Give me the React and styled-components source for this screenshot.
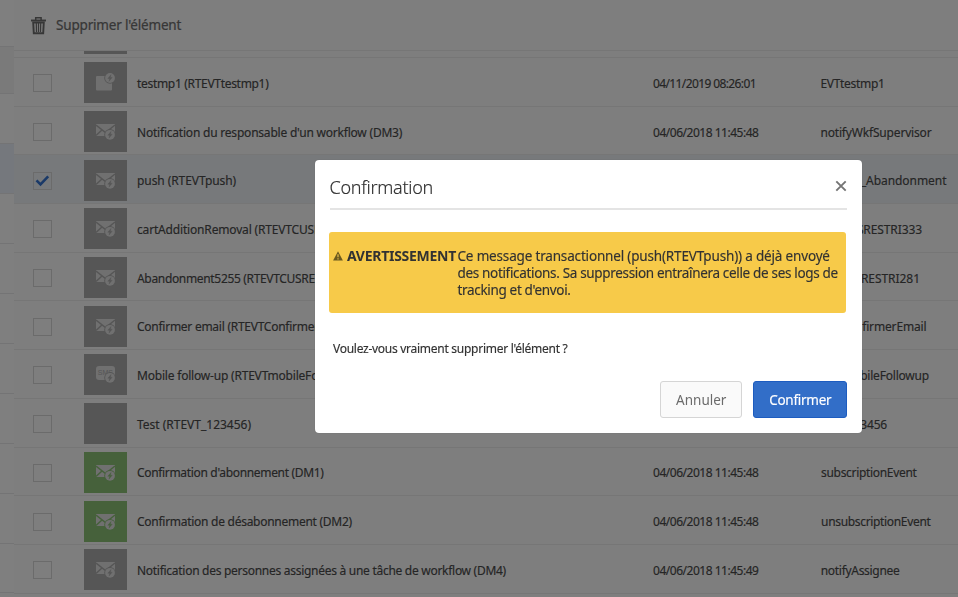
import React from "react";
import styled, { createGlobalStyle } from "styled-components";

const Global = createGlobalStyle`
  * { box-sizing: border-box; }
  body { margin: 0; overflow: hidden; font-family: "Noto Sans", sans-serif; color: #4a4a4a; }
`;

const Page = styled.div`
  display: flex;
  width: 958px;
  height: 597px;
  overflow: hidden;
  background: #fcfcfc;
`;

const Rail = styled.aside`
  flex: none;
  width: 14px;
`;

const RailItem = styled.div`
  height: ${(p) => p.$h}px;
  background: ${(p) => p.$bg || "#ffffff"};
  border-bottom: 1px solid #e8e8ea;
`;

const Main = styled.main`
  flex: 1;
  min-width: 0;
  display: flex;
  flex-direction: column;
`;

const Toolbar = styled.header`
  flex: none;
  display: flex;
  align-items: center;
  gap: 9px;
  height: 51px;
  padding-left: 16px;
  border-bottom: 1px solid #ececec;
  color: #6e6e6e;
  font-size: 13.5px;
  letter-spacing: -0.18px;
`;

const ToolbarLabel = styled.span`
  -webkit-text-stroke: 0.2px currentColor;
`;

const PartialRow = styled.div`
  flex: none;
  height: 7px;
  padding-left: 70px;
  border-bottom: 1px solid #ececec;
`;

const PartialTile = styled.div`
  width: 43px;
  height: 3px;
  background: #acacac;
`;

const Row = styled.div`
  flex: none;
  display: flex;
  align-items: center;
  height: 48.7px;
  padding-left: 19px;
  background: ${(p) => (p.$selected ? "#eff3f7" : "transparent")};
  border-bottom: 1px solid #ececec;
  font-size: 12px;
  white-space: nowrap;
`;

const Checkbox = styled.span`
  display: flex;
  align-items: center;
  justify-content: center;
  width: 19px;
  height: 18px;
  margin-top: 3px;
  border: 1px solid #d6d6d6;
`;

const Tile = styled.span`
  display: flex;
  align-items: center;
  justify-content: center;
  width: 43px;
  height: 41px;
  margin-left: 32px;
  margin-top: 2px;
  background: ${(p) => (p.$live ? "#8cc277" : "#acacac")};
`;

const Text = styled.span`
  letter-spacing: ${(p) => p.$track}px;
  -webkit-text-stroke: 0.15px currentColor;
`;

const NameCell = styled.div`
  width: 526px;
  padding: 3px 0 0 10px;
`;

const DateCell = styled.div`
  width: 167.5px;
  padding-top: 3px;
`;

const EventCell = styled.div`
  display: flex;
  justify-content: flex-end;
  width: ${(p) => p.$w}px;
  padding-top: 3px;
`;

const Overlay = styled.div`
  position: fixed;
  inset: 0;
  padding: 160px 0 0 314.5px;
  background: rgba(0, 0, 0, 0.5);
`;

const Dialog = styled.section`
  width: 547.5px;
  height: 272.5px;
  padding: 0 15px;
  border-radius: 4px;
  background: #ffffff;
  color: #323232;
  box-shadow: 0 0 1px rgba(0, 0, 0, 0.3);
`;

const DialogHeader = styled.div`
  display: flex;
  align-items: center;
  justify-content: space-between;
  height: 50px;
  padding-top: 4px;
  border-bottom: 2px solid #e4e4e4;
`;

const Title = styled.h1`
  margin: 2px 0 0;
  font-size: 18px;
  font-weight: 300;
  letter-spacing: -0.27px;
  color: #323232;
  -webkit-text-stroke: 0.15px currentColor;
`;

const Warning = styled.div`
  display: flex;
  align-items: flex-start;
  width: 517px;
  height: 81px;
  margin: 22px 0 0 -0.5px;
  padding: 15px 0 0 4px;
  border-radius: 3px;
  background: #f7ca49;
  font-size: 13.5px;
  line-height: 17px;
`;

const WarningLabel = styled.strong`
  display: flex;
  align-items: center;
  width: 124.5px;
  gap: 4px;
  font-size: 14px;
  letter-spacing: -0.27px;
`;

const WarningBody = styled.div`
  display: flex;
  flex-direction: column;
  padding-top: 1px;
  white-space: nowrap;
`;

const Question = styled.p`
  height: 18px;
  margin: 26.5px 0 0 3.5px;
  font-size: 12px;
  line-height: 18px;
`;

const Actions = styled.div`
  display: flex;
  justify-content: flex-end;
  gap: 11px;
  margin-top: 23px;
`;

const Button = styled.button`
  width: ${(p) => (p.$primary ? 94.5 : 81.5)}px;
  height: 37.5px;
  padding: 1px 0 0 1px;
  border: 1px solid ${(p) => (p.$primary ? "#1d5cc0" : "#d5d5d5")};
  border-radius: 3px;
  background: ${(p) => (p.$primary ? "#326ec8" : "#fafafa")};
  color: ${(p) => (p.$primary ? "#ffffff" : "#6b6b6b")};
  font-family: inherit;
  font-size: 13.5px;
`;

const TrashIcon = () => (
  <svg width="17" height="19" viewBox="0 0 17 19" fill="none" stroke="#6e6e6e">
    <path d="M1 4.5h15" strokeWidth="1.9" />
    <path d="M5.7 4V1.8h5.4V4" strokeWidth="1.5" />
    <path d="M3.2 6.5l.6 10.7h9.4l.6-10.7Z" strokeWidth="1.9" />
    <path d="M6.3 7l.2 9M8.5 7v9M10.7 7l-.2 9" strokeWidth="1.2" />
  </svg>
);

const Bolt = ({ y, fill }) => (
  <g transform={`translate(14 ${y})`}>
    <circle r="5.8" fill={fill} />
    <circle r="4.9" fill="#e0e0e0" />
    <path d="M1-3.3-2.2.5H-.3L-1 3.3 2.2-.6H.3Z" fill={fill} stroke={fill} strokeWidth="0.4" />
  </g>
);

const MessageIcon = ({ kind, fill }) => {
  if (kind === "none") return null;
  return (
    <svg width="20" height="19" viewBox="0 0 20 19">
      {kind === "mail" && (
        <>
          <path d="M0 2h19v12H0Z" fill="#e0e0e0" />
          <path d="M0 3l9.5 7.5L19 3M0 13.5l6.5-6M19 13.5l-6.5-6" stroke={fill} strokeWidth="1.5" fill="none" />
          <Bolt y={12.8} fill={fill} />
        </>
      )}
      {kind === "push" && (
        <>
          <rect x="0" y="3" width="16" height="14.5" rx="1" fill="#e0e0e0" />
          <Bolt y={5} fill={fill} />
        </>
      )}
      {kind === "sms" && (
        <>
          <rect x="0" y="1" width="19" height="14" rx="3" fill="#e0e0e0" />
          <text x="1.8" y="10.3" fontSize="7" fontFamily="Liberation Sans, sans-serif" fill={fill}>SMS</text>
          <Bolt y={12.8} fill={fill} />
        </>
      )}
    </svg>
  );
};

const CheckIcon = () => (
  <svg width="15" height="13" viewBox="0 0 15 13">
    <path d="M1.5 6.3l4 4 7.7-8" stroke="#3473d0" strokeWidth="2.6" fill="none" />
  </svg>
);

const AlertIcon = () => (
  <svg width="10" height="10" viewBox="0 0 10 10">
    <path d="M5 .3 9.9 9.5H.1Z" fill="#6b591f" />
    <path d="M5 3.3v3M5 7.3v1.2" stroke="#f7ca49" strokeWidth="1.1" />
  </svg>
);

const CloseIcon = () => (
  <svg width="12" height="12" viewBox="0 0 12 12">
    <path d="M1.3 1.3l9.4 9.4M10.7 1.3l-9.4 9.4" stroke="#747474" strokeWidth="1.9" />
  </svg>
);

const STANDARD = "04/06/2018 11:45:48";
const rows = [
  { name: "testmp1 (RTEVTtestmp1)", track: -0.31, kind: "push", date: "04/11/2019 08:26:01", dateTrack: -0.61, event: "EVTtestmp1", w: 64, eTrack: -0.32 },
  { name: "Notification du responsable d'un workflow (DM3)", track: -0.21, kind: "mail", event: "notifyWkfSupervisor", w: 111, eTrack: -0.17 },
  { name: "push (RTEVTpush)", track: -0.08, kind: "mail", selected: true, event: "EVT_Abandonment", w: 126, eTrack: -0.05 },
  { name: "cartAdditionRemoval (RTEVTCUSRESTRI333)", track: -0.17, kind: "mail", event: "EVTCUSRESTRI333", w: 101.5, eTrack: -0.1 },
  { name: "Abandonment5255 (RTEVTCUSRESTRI281)", track: -0.33, kind: "mail", event: "EVTCUSRESTRI281", w: 99.5, eTrack: -0.05 },
  { name: "Confirmer email (RTEVTConfirmerEmail)", track: -0.26, kind: "mail", event: "EVTConfirmerEmail", w: 106, eTrack: -0.15 },
  { name: "Mobile follow-up (RTEVTmobileFollowup)", track: -0.2, kind: "sms", event: "EVTmobileFollowup", w: 108.5, eTrack: -0.2 },
  { name: "Test (RTEVT_123456)", track: -0.01, kind: "none", event: "EVT_123456", w: 66.5, eTrack: -0.2 },
  { name: "Confirmation d'abonnement (DM1)", track: -0.33, kind: "mail", live: true, event: "subscriptionEvent", w: 96, eTrack: -0.32 },
  { name: "Confirmation de désabonnement (DM2)", track: -0.27, kind: "mail", live: true, event: "unsubscriptionEvent", w: 110, eTrack: -0.33 },
  { name: "Notification des personnes assignées à une tâche de workflow (DM4)", track: -0.28, kind: "mail", date: "04/06/2018 11:45:49", event: "notifyAssignee", w: 79, eTrack: -0.3 },
];

const rail = [
  { h: 47 },
  { h: 47, bg: "#f4f4f4" },
  { h: 50 },
  { h: 50, bg: "#eaf1fb" },
  ...Array.from({ length: 7 }, () => ({ h: 50 })),
  { h: 49 },
];

export default function App() {
  return (
    <>
      <Global />
      <Page>
        <Rail>
          {rail.map((r, i) => (
            <RailItem key={i} $h={r.h} $bg={r.bg} />
          ))}
        </Rail>
        <Main>
          <Toolbar>
            <TrashIcon />
            <ToolbarLabel>Supprimer l'élément</ToolbarLabel>
          </Toolbar>
          <PartialRow>
            <PartialTile />
          </PartialRow>
          {rows.map((r) => (
            <Row key={r.name} $selected={r.selected}>
              <Checkbox>{r.selected && <CheckIcon />}</Checkbox>
              <Tile $live={r.live}>
                <MessageIcon kind={r.kind} fill={r.live ? "#8cc277" : "#acacac"} />
              </Tile>
              <NameCell>
                <Text $track={r.track}>{r.name}</Text>
              </NameCell>
              <DateCell>
                <Text $track={r.dateTrack || -0.48}>{r.date || STANDARD}</Text>
              </DateCell>
              <EventCell $w={r.w}>
                <Text $track={r.eTrack}>{r.event}</Text>
              </EventCell>
            </Row>
          ))}
        </Main>
      </Page>
      <Overlay>
        <Dialog>
          <DialogHeader>
            <Title>Confirmation</Title>
            <CloseIcon />
          </DialogHeader>
          <Warning>
            <WarningLabel>
              <AlertIcon />
              AVERTISSEMENT
            </WarningLabel>
            <WarningBody>
              <Text $track={-0.17}>Ce message transactionnel (push(RTEVTpush)) a déjà envoyé</Text>
              <Text $track={-0.33}>des notifications. Sa suppression entraînera celle de ses logs de</Text>
              <Text $track={-0.33}>tracking et d'envoi.</Text>
            </WarningBody>
          </Warning>
          <Question>
            <Text $track={-0.27}>Voulez-vous vraiment supprimer l'élément ?</Text>
          </Question>
          <Actions>
            <Button>Annuler</Button>
            <Button $primary>
              <Text $track={-0.28}>Confirmer</Text>
            </Button>
          </Actions>
        </Dialog>
      </Overlay>
    </>
  );
}
